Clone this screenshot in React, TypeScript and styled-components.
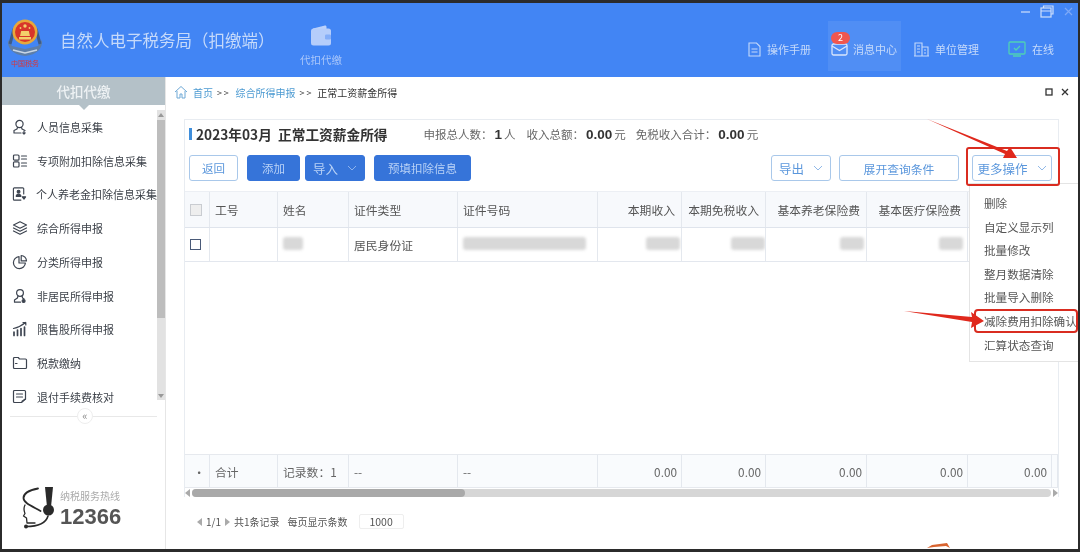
import styled, { createGlobalStyle } from 'styled-components';

const GlobalStyle = createGlobalStyle`
    html, body {
        margin: 0;
        padding: 0;
        background: #fff;
    }
    * {
        box-sizing: border-box;
    }
`

const navItems = [
    { label: '人员信息采集', icon: 'person' },
    { label: '专项附加扣除信息采集', icon: 'list' },
    { label: '个人养老金扣除信息采集', icon: 'pension' },
    { label: '综合所得申报', icon: 'layers' },
    { label: '分类所得申报', icon: 'pie' },
    { label: '非居民所得申报', icon: 'user' },
    { label: '限售股所得申报', icon: 'bars' },
    { label: '税款缴纳', icon: 'folder' },
    { label: '退付手续费核对', icon: 'refund' },
];

const menuItems = ['删除', '自定义显示列', '批量修改', '整月数据清除', '批量导入删除', '减除费用扣除确认', '汇算状态查询'];

const columns = [
    { title: '工号', right: false },
    { title: '姓名', right: false },
    { title: '证件类型', right: false },
    { title: '证件号码', right: false },
    { title: '本期收入', right: true },
    { title: '本期免税收入', right: true },
    { title: '基本养老保险费', right: true },
    { title: '基本医疗保险费', right: true },
    { title: '', right: true },
];

function NavIcon(props: { name: string }) {
    const common = { fill: 'none', stroke: '#3d4450', strokeWidth: 1.2, strokeLinecap: 'round' as const, strokeLinejoin: 'round' as const };
    return (
        <svg width="16" height="16" viewBox="0 0 16 16" {...common}>
            {props.name === 'person' && <>
                <circle cx="7.5" cy="5" r="3.6" />
                <path d="M5.5 8.3 5 10 2 11.5V14h7M9.5 8.3 10 10l3 1.5" />
                <path d="M12 12.2v2.6M10.8 13.8l1.2 1.2 1.2-1.2" />
            </>}
            {props.name === 'list' && <>
                <rect x="1.5" y="2" width="5.5" height="5.2" rx="1" />
                <rect x="1.5" y="8.8" width="5.5" height="5.2" rx="1" />
                <path d="M9.5 3h5M9.5 6h5M9.5 10h5M9.5 13h5" />
            </>}
            {props.name === 'pension' && <>
                <path d="M12.5 8V2.5a1 1 0 0 0-1-1h-9a1 1 0 0 0-1 1v11a1 1 0 0 0 1 1h7" />
                <circle cx="7" cy="5.5" r="1.5" fill="#3d4450" />
                <path d="M4.5 10.5c0-3 5-3 5 0z" fill="#3d4450" />
                <path d="M11 11h3.5l-1.75 2.5z" fill="#3d4450" />
            </>}
            {props.name === 'layers' && <>
                <path d="M8 1.8 14.5 5 8 8.2 1.5 5z" />
                <path d="M1.5 8 8 11.2 14.5 8" />
                <path d="M1.5 11 8 14.2 14.5 11" />
            </>}
            {props.name === 'pie' && <>
                <path d="M7 2.6a6 6 0 1 0 6.4 6.4H7z" />
                <path d="M9.2 1.5a5.5 5.5 0 0 1 5.3 5.4H9.2z" />
            </>}
            {props.name === 'user' && <>
                <circle cx="8" cy="5" r="3.4" />
                <path d="M6 8 5.4 10 2.5 12v2.2h6M10 8l.6 2 1.5 1" />
                <circle cx="11.6" cy="13" r="1.5" fill="#3d4450" />
            </>}
            {props.name === 'bars' && <>
                <path d="M2 11v3.5M5.5 9v5.5M9 7.5v7M12.5 6v8.5" strokeWidth="1.7" />
                <path d="M1.5 7.5C6 6.5 10 4.5 13.5 1.5M11 1.5h2.8v2.5" />
            </>}
            {props.name === 'folder' && <>
                <path d="M1.5 3.5a1 1 0 0 1 1-1h3.7l1.3 1.5h6a1 1 0 0 1 1 1v7.5a1 1 0 0 1-1 1h-11a1 1 0 0 1-1-1z" />
                <path d="M3.5 8.5h1.5" />
            </>}
            {props.name === 'refund' && <>
                <path d="M9.5 13.5H2.5a1 1 0 0 1-1-1v-10a1 1 0 0 1 1-1h10a1 1 0 0 1 1 1v7.5z" />
                <path d="M4.5 5h6M4.5 8h6" />
                <path d="M13.5 10 10 12.2" />
            </>}
        </svg>
    );
}

function Logo() {
    return (
        <LogoBox>
            <svg width="40" height="40" viewBox="0 0 40 40">
                <path d="M3 21C2 29 8 36 20 37 32 36 38 29 37 21L33 27 20 30 7 27Z" fill="#5d7ea8" />
                <path d="M5 25 9 10M35 25 31 10" stroke="#3d5c89" strokeWidth="3" fill="none" />
                <path d="M8 31 20 34 32 31" stroke="#c8d6e6" strokeWidth="1.5" fill="none" />
                <circle cx="20" cy="13" r="12.5" fill="#e8a83a" />
                <circle cx="20" cy="13" r="10" fill="#d8362a" />
                <path d="M14 18h12v2.5H14z" fill="#f3cf6b" />
                <path d="M15 17l1.2-5h7.6l1.2 5z" fill="#f3cf6b" />
                <circle cx="20" cy="7" r="1.7" fill="#f3cf6b" />
                <circle cx="15.5" cy="9" r="0.9" fill="#f3cf6b" />
                <circle cx="24.5" cy="9" r="0.9" fill="#f3cf6b" />
            </svg>
            <LogoCaption>中国税务</LogoCaption>
        </LogoBox>
    );
}

function HotlineMark() {
    return (
        <svg width="34" height="44" viewBox="0 0 34 44" fill="none" stroke="#2a2a2a" strokeLinecap="round" strokeLinejoin="round">
            <path d="M16 1.5C8 3 1.5 6 1.5 11c0 5 8 8 17 13" strokeWidth="1.8" />
            <path d="M3 18c-2 4-1 6 0 8.5L1.5 29l3 2 .5 5h8" strokeWidth="1.3" />
            <path d="M23 0h8l-2 20h-4z" fill="#2a2a2a" stroke="none" />
            <circle cx="26.5" cy="23" r="5.5" fill="#2a2a2a" stroke="none" />
            <path d="M26 29c-2 7-8 10.5-22 10.5" strokeWidth="1.6" />
            <circle cx="4" cy="39.5" r="2" fill="#2a2a2a" stroke="none" />
        </svg>
    );
}

function Caret() {
    return (
        <svg width="10" height="6" viewBox="0 0 10 6" fill="none" stroke="currentColor" strokeWidth="0.9" opacity="0.75">
            <path d="M1 1l4 4 4-4" />
        </svg>
    );
}

function App() {
    return (
        <>
            <GlobalStyle />
            <Frame>
                <Window>
                    <Header>
                        <Logo />
                        <AppTitle>自然人电子税务局（扣缴端）</AppTitle>
                        <ModuleTab>
                            <svg width="22" height="21" viewBox="0 0 22 21">
                                <path d="M3 3.5 15 0.5c1 0 1.5.6 1.5 1.5V4H3z" fill="#bcd2fb" />
                                <rect x="1" y="3.5" width="20" height="17" rx="2.5" fill="#b5cdfb" />
                                <rect x="15" y="9.5" width="6" height="5" rx="1.2" fill="#85aef8" />
                            </svg>
                            <ModuleLabel>代扣代缴</ModuleLabel>
                        </ModuleTab>
                        <HeaderRight>
                            <WindowControls>
                                <svg width="11" height="11" viewBox="0 0 11 11"><path d="M1 6h9" stroke="#cfe0fb" strokeWidth="1.2" /></svg>
                                <svg width="14" height="13" viewBox="0 0 14 13" fill="none" stroke="#cfe0fb" strokeWidth="1.2">
                                    <rect x="1" y="3" width="10" height="9" />
                                    <path d="M1 6h10M3.5 3V1h9.5v8H11" />
                                </svg>
                                <svg width="11" height="11" viewBox="0 0 11 11"><path d="M2 2l7 7M9 2l-7 7" stroke="#7da9f7" strokeWidth="1.2" /></svg>
                            </WindowControls>
                            <TopNav>
                                <TopNavItem $left={0}>
                                    <svg width="13" height="15" viewBox="0 0 13 15" fill="none" stroke="#c6daFA" strokeWidth="1.1">
                                        <path d="M1 1h7.5L12 4.5V14H1zM3.5 7h6M3.5 10h6" />
                                    </svg>
                                    <TopNavText>操作手册</TopNavText>
                                </TopNavItem>
                                <MessageItem>
                                    <Badge>2</Badge>
                                    <svg width="17" height="13" viewBox="0 0 17 13" fill="none" stroke="#d9e6fc" strokeWidth="1.3">
                                        <rect x="1" y="1" width="15" height="11" rx="1.5" />
                                        <path d="M1 3l7.5 4.5L16 3" />
                                    </svg>
                                    <TopNavText>消息中心</TopNavText>
                                </MessageItem>
                                <TopNavItem $left={13}>
                                    <svg width="15" height="15" viewBox="0 0 15 15" fill="none" stroke="#c6daFA" strokeWidth="1.1">
                                        <path d="M1 14V1h7v13M8 5h6v9M0 14h15M3 4h3M3 7h3M3 10h3M10 8h2M10 11h2" />
                                    </svg>
                                    <TopNavText>单位管理</TopNavText>
                                </TopNavItem>
                                <TopNavItem $left={29}>
                                    <svg width="18" height="16" viewBox="0 0 18 16" fill="none" stroke="#4fd1b5" strokeWidth="1.3">
                                        <rect x="1" y="1" width="16" height="12" rx="1" />
                                        <path d="M6 7l2 2 4-4M5 15h8" />
                                    </svg>
                                    <TopNavText>在线</TopNavText>
                                </TopNavItem>
                            </TopNav>
                        </HeaderRight>
                    </Header>

                    <Body>
                        <Sidebar>
                            <SideHead>代扣代缴</SideHead>
                            <SideNavRow>
                                <SideNav>
                                    {navItems.map((item) => (
                                        <SideNavItem key={item.label}>
                                            <NavIcon name={item.icon} />
                                            <span>{item.label}</span>
                                        </SideNavItem>
                                    ))}
                                </SideNav>
                                <SideScroll>
                                    <ArrowUp />
                                    <SideThumb />
                                    <ArrowDown />
                                </SideScroll>
                            </SideNavRow>
                            <Collapse>
                                <CollapseDot>«</CollapseDot>
                            </Collapse>
                            <Hotline>
                                <HotlineMark />
                                <HotlineText>
                                    <HotlineLabel>纳税服务热线</HotlineLabel>
                                    <HotlineNumber>12366</HotlineNumber>
                                </HotlineText>
                            </Hotline>
                        </Sidebar>

                        <Main>
                            <Breadcrumb>
                                <svg width="14" height="14" viewBox="0 0 14 14" fill="none" stroke="#6fa9d6" strokeWidth="1">
                                    <path d="M1 7l6-5.5L13 7M3 6v7h3V9h2v4h3V6" />
                                </svg>
                                <CrumbLink>首页</CrumbLink>
                                <CrumbSep>&gt;&gt;</CrumbSep>
                                <CrumbLink>综合所得申报</CrumbLink>
                                <CrumbSep>&gt;&gt;</CrumbSep>
                                <CrumbCurrent>正常工资薪金所得</CrumbCurrent>
                                <CrumbTools>
                                    <svg width="8" height="8" viewBox="0 0 8 8" fill="none" stroke="#333" strokeWidth="1.3"><rect x="1" y="1" width="6" height="6" /></svg>
                                    <svg width="8" height="8" viewBox="0 0 8 8" fill="none" stroke="#333" strokeWidth="1.3"><path d="M1 1l6 6M7 1l-6 6" /></svg>
                                </CrumbTools>
                            </Breadcrumb>

                            <Card>
                                <TitleRow>
                                    <TitleText>2023年03月&nbsp;&nbsp;正常工资薪金所得</TitleText>
                                    <Stat $left={36}>申报总人数：<b>1</b>人</Stat>
                                    <Stat $left={11}>收入总额：<b>0.00</b>元</Stat>
                                    <Stat $left={10}>免税收入合计：<b>0.00</b>元</Stat>
                                </TitleRow>
                                <Toolbar>
                                    <GhostButton $width={49}>返回</GhostButton>
                                    <SolidButton $width={53} $left={9}>添加</SolidButton>
                                    <SolidButton $width={60} $left={5} $size={12.5}>导入<Caret /></SolidButton>
                                    <SolidButton $width={97} $left={9}>预填扣除信息</SolidButton>
                                    <ToolbarGap />
                                    <GhostButton $width={60} $size={12.5}>导出<Caret /></GhostButton>
                                    <GhostButton $width={120} $left={8} $size={11.8}>展开查询条件</GhostButton>
                                    <MoreWrap>
                                        <GhostButton $width={80} $size={12.5}>更多操作<Caret /></GhostButton>
                                        <Menu>
                                            {menuItems.map((m) => <MenuItem key={m}>{m}</MenuItem>)}
                                        </Menu>
                                    </MoreWrap>
                                </Toolbar>

                                <Table>
                                    <HeadRow>
                                        <Cell><HeadCheck /></Cell>
                                        {columns.map((c, i) => (
                                            <HeadCell key={i} $right={c.right}>{c.title}</HeadCell>
                                        ))}
                                        <Cell />
                                    </HeadRow>
                                    <DataRow>
                                        <Cell><RowCheck /></Cell>
                                        <Cell />
                                        <Cell><Smudge $width={20} /></Cell>
                                        <Cell>居民身份证</Cell>
                                        <Cell><Smudge $width={123} /></Cell>
                                        <Cell $right><Smudge $width={34} $nudge={3} /></Cell>
                                        <Cell $right><Smudge $width={34} $nudge={4} /></Cell>
                                        <Cell $right><Smudge $width={24} $nudge={2} /></Cell>
                                        <Cell $right><Smudge $width={24} /></Cell>
                                        <Cell />
                                        <Cell />
                                    </DataRow>
                                    <TableFill />
                                    <FootRow>
                                        <Cell $right>·</Cell>
                                        <Cell>合计</Cell>
                                        <Cell>记录数：1</Cell>
                                        <Cell>--</Cell>
                                        <Cell>--</Cell>
                                        <Cell $right>0.00</Cell>
                                        <Cell $right>0.00</Cell>
                                        <Cell $right>0.00</Cell>
                                        <Cell $right>0.00</Cell>
                                        <Cell $right>0.00</Cell>
                                        <Cell />
                                    </FootRow>
                                    <HScroll>
                                        <ArrowLeft />
                                        <HTrack><HThumb /></HTrack>
                                        <ArrowRight />
                                    </HScroll>
                                </Table>
                            </Card>

                            <Pager>
                                <ArrowLeft />
                                <span>1/1</span>
                                <ArrowRight />
                                <span>共1条记录</span>
                                <PagerLabel>每页显示条数</PagerLabel>
                                <PageSize>1000</PageSize>
                            </Pager>
                        </Main>
                    </Body>
                </Window>

                <Annotations width="1080" height="552" viewBox="0 0 1080 552">
                    <rect x="967" y="148" width="92" height="37" rx="2" fill="none" stroke="#d92c20" strokeWidth="2" />
                    <rect x="975" y="310" width="102" height="22" rx="3" fill="none" stroke="#d92c20" strokeWidth="2" />
                    <path d="M927 119 1007 151 1010 147 1017 158 1003 158 1005 154Z" fill="#e0281c" />
                    <path d="M904 311 972 317 971 312 984 321 971 328 972 322Z" fill="#e0281c" />
                    <path d="M927 548 932 545 947 543 950 548 946 546 934 547Z" fill="#d8632f" />
                </Annotations>
            </Frame>
        </>
    );
}

const Frame = styled.div`
    position: relative;
    width: 1080px;
    height: 552px;
    overflow: hidden;
    background: #2b2b2b;
    padding: 3px 2px 3px 2px;
    font-family: "Noto Sans CJK SC", "Noto Sans", sans-serif;
    filter: blur(0.55px);
`

const Window = styled.div`
    width: 100%;
    height: 100%;
    display: flex;
    flex-direction: column;
    overflow: hidden;
    background: #fff;
`

const Header = styled.header`
    flex: 0 0 74px;
    display: flex;
    align-items: center;
    background: #4285f4;
    padding-left: 2px;
`

const LogoBox = styled.div`
    width: 42px;
    display: flex;
    flex-direction: column;
    align-items: center;
    margin-top: 6px;
`

const LogoCaption = styled.div`
    font-size: 7px;
    line-height: 9px;
    color: #d8363a;
    white-space: nowrap;
`

const AppTitle = styled.div`
    margin-left: 14px;
    width: 222px;
    font-size: 16.5px;
    color: #c6daFA;
    white-space: nowrap;
`

const ModuleTab = styled.div`
    margin-left: 17px;
    width: 44px;
    display: flex;
    flex-direction: column;
    align-items: center;
    gap: 8px;
    margin-top: 10px;
`

const ModuleLabel = styled.div`
    font-size: 10.5px;
    line-height: 12px;
    color: #a9c6fa;
    white-space: nowrap;
`

const HeaderRight = styled.div`
    margin-left: auto;
    align-self: stretch;
    display: flex;
    flex-direction: column;
`

const WindowControls = styled.div`
    height: 18px;
    display: flex;
    align-items: center;
    justify-content: flex-end;
    gap: 9px;
    padding-right: 4px;
    padding-bottom: 2px;
`

const TopNav = styled.nav`
    height: 50px;
    display: flex;
    align-items: stretch;
    padding-right: 24px;
`

const TopNavItem = styled.div<{ $left: number }>`
    margin-left: ${(p) => p.$left}px;
    display: flex;
    align-items: center;
    gap: 6px;
    padding-top: 6px;
`

const MessageItem = styled.div`
    position: relative;
    margin-left: 17px;
    width: 73px;
    display: flex;
    align-items: center;
    gap: 5px;
    padding: 6px 4px 0 3px;
    background: rgba(255, 255, 255, 0.08);
`

const TopNavText = styled.span`
    font-size: 11px;
    color: #c6daFA;
    white-space: nowrap;
`

const Badge = styled.span`
    position: absolute;
    left: 3px;
    top: 11px;
    width: 19px;
    height: 12px;
    border-radius: 6px;
    background: #f0564e;
    color: #fff;
    font-size: 9px;
    line-height: 12px;
    text-align: center;
`

const Body = styled.div`
    flex: 1;
    min-height: 0;
    display: flex;
`

const Sidebar = styled.aside`
    flex: 0 0 164px;
    min-width: 0;
    width: 164px;
    display: flex;
    flex-direction: column;
    border-right: 1px solid #e6e6e6;
`

const SideHead = styled.div`
    position: relative;
    height: 28px;
    background: #b4c1c8;
    color: #eef2f4;
    font-size: 13.5px;
    font-weight: 500;
    line-height: 28px;
    text-align: center;

    &::after {
        content: '';
        position: absolute;
        left: 77px;
        bottom: -5px;
        border-left: 5px solid transparent;
        border-right: 5px solid transparent;
        border-top: 5px solid #b4c1c8;
    }
`

const SideNavRow = styled.div`
    margin-top: 5px;
    height: 304px;
    display: flex;
`

const SideNav = styled.ul`
    flex: 1;
    min-width: 0;
    margin: 0;
    padding: 0;
    list-style: none;
`

const SideNavItem = styled.li`
    height: 33.75px;
    display: flex;
    align-items: center;
    gap: 9px;
    padding-left: 10px;
    font-size: 11px;
    color: #3a3f47;
    white-space: nowrap;
`

const SideScroll = styled.div`
    flex: 0 0 8px;
    display: flex;
    flex-direction: column;
    align-items: center;
    gap: 3px;
    padding: 3px 0 2px;
    background: #e2e2e2;
    height: 290px;
`

const SideThumb = styled.div`
    width: 8px;
    height: 198px;
    margin-bottom: auto;
    background: #bdbdbd;
`

const ArrowUp = styled.i`
    border-left: 3px solid transparent;
    border-right: 3px solid transparent;
    border-bottom: 4px solid #999;
`

const ArrowDown = styled.i`
    border-left: 3px solid transparent;
    border-right: 3px solid transparent;
    border-top: 4px solid #999;
`

const ArrowLeft = styled.i`
    flex: none;
    border-top: 4px solid transparent;
    border-bottom: 4px solid transparent;
    border-right: 5px solid #aaa;
`

const ArrowRight = styled.i`
    flex: none;
    border-top: 4px solid transparent;
    border-bottom: 4px solid transparent;
    border-left: 5px solid #aaa;
`

const Collapse = styled.div`
    position: relative;
    margin: 2px 8px 0 8px;
    height: 1px;
    background: #e8e8e8;
`

const CollapseDot = styled.div`
    position: absolute;
    left: 67px;
    top: -8px;
    width: 16px;
    height: 16px;
    border-radius: 50%;
    background: #fff;
    border: 1px solid #eee;
    color: #888;
    font-size: 11px;
    line-height: 13px;
    text-align: center;
`

const Hotline = styled.div`
    margin-top: auto;
    padding: 0 0 18px 20px;
    display: flex;
    align-items: flex-end;
    gap: 4px;
`

const HotlineText = styled.div`
    display: flex;
    flex-direction: column;
    padding-bottom: 1px;
`

const HotlineLabel = styled.span`
    font-size: 10px;
    line-height: 14px;
    color: #aaa;
    white-space: nowrap;
`

const HotlineNumber = styled.span`
    font-family: "Liberation Sans", sans-serif;
    font-size: 22px;
    line-height: 27px;
    font-weight: 700;
    color: #555;
`

const Main = styled.main`
    flex: 1;
    min-width: 0;
    display: flex;
    flex-direction: column;
`

const Breadcrumb = styled.div`
    height: 30px;
    flex: none;
    display: flex;
    align-items: center;
    padding: 0 9px 0 8px;
    font-size: 10px;
`

const CrumbLink = styled.span`
    color: #4d9bd2;
    margin-left: 5px;
    white-space: nowrap;
`

const CrumbSep = styled.span`
    color: #444;
    margin-left: 4px;
    font-size: 9px;
    letter-spacing: 1.8px;
`

const CrumbCurrent = styled.span`
    color: #333;
    margin-left: 4px;
    white-space: nowrap;
`

const CrumbTools = styled.div`
    margin-left: auto;
    display: flex;
    gap: 8px;
`

const Card = styled.section`
    margin: 12px 19px 0 18px;
    flex: none;
    border: 1px solid #e8ecf1;
    border-bottom: none;
`

const TitleRow = styled.div`
    height: 35px;
    display: flex;
    align-items: center;
    padding: 0 0 7px 4px;
`

const TitleText = styled.div`
    position: relative;
    padding-left: 7px;
    font-size: 13.7px;
    font-weight: 700;
    color: #333;
    white-space: nowrap;

    &::before {
        content: '';
        position: absolute;
        left: 0;
        top: 4px;
        bottom: 4px;
        width: 3px;
        background: #3f8edb;
    }
`

const Stat = styled.div<{ $left: number }>`
    margin-left: ${(p) => p.$left}px;
    font-size: 11.5px;
    color: #666;
    white-space: nowrap;

    b {
        margin: 0 2px 0 2px;
        font-size: 13.5px;
        font-family: "Liberation Sans", sans-serif;
        color: #333;
    }
`

const Toolbar = styled.div`
    height: 26px;
    display: flex;
    align-items: stretch;
    padding: 0 6px 0 4px;
`

const ToolbarGap = styled.div`
    flex: 1;
`

const BaseButton = styled.button<{ $width: number; $left?: number; $size?: number }>`
    width: ${(p) => p.$width}px;
    margin-left: ${(p) => p.$left ?? 0}px;
    height: 26px;
    display: flex;
    align-items: center;
    justify-content: center;
    gap: 9px;
    padding: 0;
    border-radius: 3px;
    font-family: inherit;
    font-size: ${(p) => p.$size ?? 11.5}px;
    white-space: nowrap;
`

const GhostButton = styled(BaseButton)`
    background: #fff;
    border: 1px solid #a9c8ea;
    color: #5b97dc;
`

const SolidButton = styled(BaseButton)`
    background: #3674d9;
    border: 1px solid #3674d9;
    color: #b9d2f6;
`

const MoreWrap = styled.div`
    position: relative;
    margin-left: 13px;
    display: flex;
`

const Menu = styled.ul`
    position: absolute;
    left: -3px;
    top: 28px;
    width: 112px;
    height: 179px;
    margin: 0;
    padding: 8px 0 0 14px;
    list-style: none;
    background: #fff;
    border: 1px solid #e4e4e4;
    z-index: 2;
`

const MenuItem = styled.li`
    height: 23.6px;
    line-height: 23.6px;
    font-size: 11.6px;
    color: #555;
    white-space: nowrap;
`

const Table = styled.div`
    margin-top: 10px;
    height: 306px;
    display: flex;
    flex-direction: column;
`

const tableColumns = '25px 68px 71px 109px 140px 84px 84px 101px 101px 84px 1fr';

const HeadRow = styled.div`
    flex: 0 0 37px;
    display: grid;
    grid-template-columns: ${tableColumns};
    background: #f7f9fc;
    border-top: 1px solid #eceff4;
    border-bottom: 1px solid #dfe4ec;
    color: #555;
`

const DataRow = styled.div`
    flex: 0 0 34px;
    display: grid;
    grid-template-columns: ${tableColumns};
    border-bottom: 1px solid #e3e7ee;
    color: #555;
`

const TableFill = styled.div`
    flex: 1;
`

const FootRow = styled.div`
    flex: 0 0 34px;
    display: grid;
    grid-template-columns: ${tableColumns};
    background: #f9fbfd;
    border-top: 1px solid #e6e9ee;
    border-bottom: 1px solid #e6e9ee;
    color: #666;
`

const Cell = styled.div<{ $right?: boolean }>`
    display: flex;
    align-items: center;
    justify-content: ${(p) => (p.$right ? 'flex-end' : 'flex-start')};
    padding: 0 ${(p) => (p.$right ? '4px' : '0')} 0 ${(p) => (p.$right ? '0' : '5px')};
    border-right: 1px solid #e4e8ee;
    font-size: 11.8px;
    white-space: nowrap;
    overflow: hidden;
`

const HeadCell = styled(Cell)`
    padding-right: ${(p) => (p.$right ? '6px' : '0')};
`

const HeadCheck = styled.div`
    width: 12px;
    height: 12px;
    border: 1px solid #c9ccd1;
    background: #eee;
`

const RowCheck = styled.div`
    width: 11px;
    height: 11px;
    border: 1px solid #4a5a78;
    background: #fff;
`

const Smudge = styled.div<{ $width: number; $nudge?: number }>`
    width: ${(p) => p.$width}px;
    height: 13px;
    margin-bottom: 3px;
    margin-right: ${(p) => -(p.$nudge ?? 0)}px;
    border-radius: 3px;
    background: #d8d8d8;
    filter: blur(1.5px);
`

const HScroll = styled.div`
    flex: 0 0 9px;
    display: flex;
    align-items: center;
    gap: 2px;
    background: #fff;
`

const HTrack = styled.div`
    flex: 1;
    height: 8px;
    border-radius: 4px;
    background: #d6d6d6;
`

const HThumb = styled.div`
    width: 273px;
    height: 8px;
    border-radius: 4px;
    background: #a9a9a9;
`

const Pager = styled.div`
    margin: 17px 0 0 31px;
    display: flex;
    align-items: center;
    gap: 4px;
    font-size: 10px;
    color: #555;
    white-space: nowrap;
`

const PagerLabel = styled.span`
    margin-left: 4px;
`

const PageSize = styled.div`
    margin-left: 7px;
    width: 45px;
    height: 15px;
    border: 1px solid #eee;
    border-radius: 2px;
    line-height: 13px;
    text-align: center;
    font-size: 10.5px;
`

const Annotations = styled.svg`
    position: absolute;
    left: 0;
    top: 0;
    z-index: 3;
    pointer-events: none;
`

export default App;
